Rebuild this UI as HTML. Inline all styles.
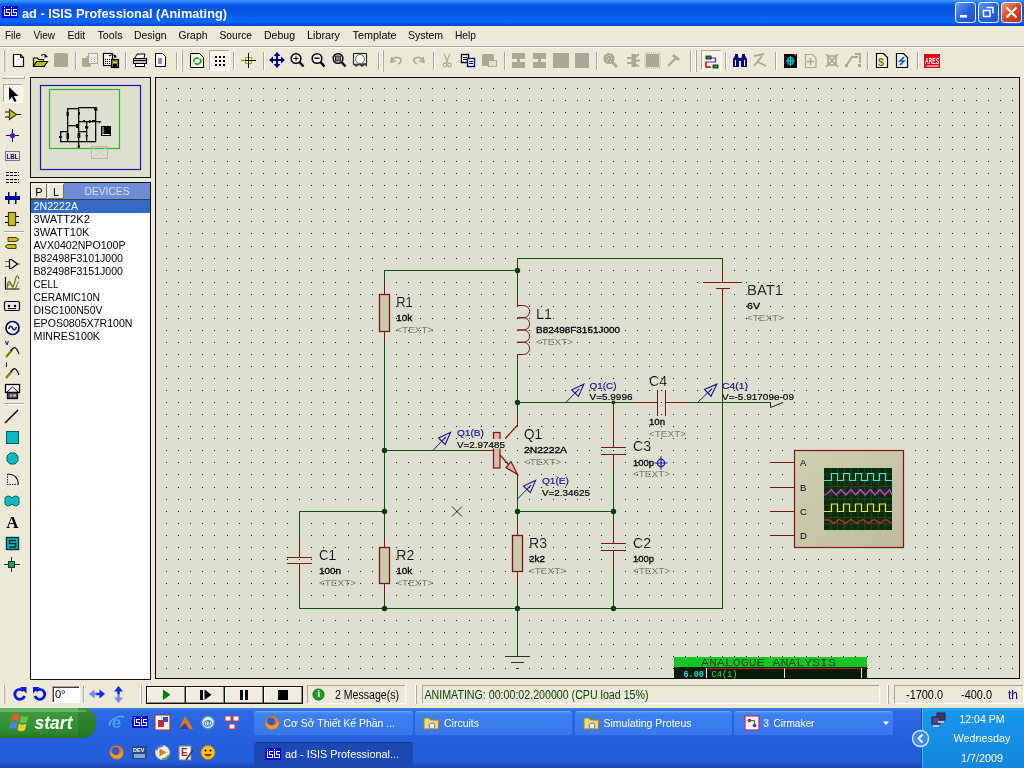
<!DOCTYPE html>
<html><head><meta charset="utf-8"><title>ad - ISIS Professional (Animating)</title>
<style>html,body{margin:0;padding:0;width:1024px;height:768px;overflow:hidden;background:#ECE9D8}
svg{display:block;font-family:"Liberation Sans",sans-serif;will-change:transform}</style></head>
<body><svg width="1024" height="768" viewBox="0 0 1024 768">
<defs>
<linearGradient id="tb" x1="0" y1="0" x2="0" y2="1">
<stop offset="0" stop-color="#3C96FF"/><stop offset="0.06" stop-color="#2E88FA"/><stop offset="0.16" stop-color="#0C60EE"/>
<stop offset="0.26" stop-color="#0454E4"/><stop offset="0.5" stop-color="#0455E6"/><stop offset="0.7" stop-color="#0663F6"/>
<stop offset="0.85" stop-color="#0664F8"/><stop offset="0.93" stop-color="#0452E0"/><stop offset="1" stop-color="#0340C4"/>
</linearGradient>
<linearGradient id="wb" x1="0" y1="0" x2="1" y2="1"><stop offset="0" stop-color="#6C9CF8"/><stop offset="0.5" stop-color="#2A62E0"/><stop offset="1" stop-color="#2050C8"/></linearGradient>
<linearGradient id="wc" x1="0" y1="0" x2="1" y2="1"><stop offset="0" stop-color="#F0A088"/><stop offset="0.5" stop-color="#D84820"/><stop offset="1" stop-color="#B83010"/></linearGradient>
</defs>
<rect x="0" y="0" width="1024" height="26" fill="url(#tb)" />
<rect x="2" y="6" width="16" height="12" fill="#0000D0" />
<rect x="4" y="7" width="1" height="1" fill="#fff" />
<rect x="4" y="9" width="1" height="7" fill="#fff" />
<rect x="4" y="15" width="6" height="1" fill="#fff" />
<rect x="6" y="9" width="4" height="1" fill="#fff" />
<rect x="6" y="9" width="1" height="4" fill="#fff" />
<rect x="6" y="12" width="4" height="1" fill="#fff" />
<rect x="9" y="12" width="1" height="4" fill="#fff" />
<rect x="11" y="7" width="1" height="1" fill="#fff" />
<rect x="11" y="9" width="1" height="7" fill="#fff" />
<rect x="11" y="15" width="6" height="1" fill="#fff" />
<rect x="13" y="9" width="4" height="1" fill="#fff" />
<rect x="13" y="9" width="1" height="4" fill="#fff" />
<rect x="13" y="12" width="4" height="1" fill="#fff" />
<rect x="16" y="12" width="1" height="4" fill="#fff" />
<text x="22" y="18" font-size="13.5" fill="#fff" textLength="205" lengthAdjust="spacingAndGlyphs" font-weight="bold" >ad - ISIS Professional (Animating)</text>
<rect x="955.5" y="2.5" width="20" height="20" rx="3" fill="url(#wb)" stroke="#fff" stroke-width="1"/>
<rect x="978.5" y="2.5" width="20" height="20" rx="3" fill="url(#wb)" stroke="#fff" stroke-width="1"/>
<rect x="1001.5" y="2.5" width="20" height="20" rx="3" fill="url(#wc)" stroke="#fff" stroke-width="1"/>
<rect x="960" y="15" width="7" height="2.5" fill="#fff" />
<path d="M986.500 7.500h6.500v6M983.500 10.500h6.500v6h-6.500z" fill="none" stroke="#fff" stroke-width="1.5" />
<path d="M1006.500 7.500l10 10M1016.500 7.500l-10 10" fill="none" stroke="#fff" stroke-width="2.2" />
<rect x="0" y="26" width="1024" height="682" fill="#ECE9D8" />
<text x="5" y="39" font-size="11" fill="#000" textLength="16" lengthAdjust="spacingAndGlyphs" >File</text>
<text x="33.5" y="39" font-size="11" fill="#000" textLength="21.5" lengthAdjust="spacingAndGlyphs" >View</text>
<text x="67.5" y="39" font-size="11" fill="#000" textLength="17.5" lengthAdjust="spacingAndGlyphs" >Edit</text>
<text x="97.5" y="39" font-size="11" fill="#000" textLength="25" lengthAdjust="spacingAndGlyphs" >Tools</text>
<text x="134" y="39" font-size="11" fill="#000" textLength="32.5" lengthAdjust="spacingAndGlyphs" >Design</text>
<text x="178.5" y="39" font-size="11" fill="#000" textLength="29" lengthAdjust="spacingAndGlyphs" >Graph</text>
<text x="219.5" y="39" font-size="11" fill="#000" textLength="32.5" lengthAdjust="spacingAndGlyphs" >Source</text>
<text x="264" y="39" font-size="11" fill="#000" textLength="31" lengthAdjust="spacingAndGlyphs" >Debug</text>
<text x="307" y="39" font-size="11" fill="#000" textLength="33" lengthAdjust="spacingAndGlyphs" >Library</text>
<text x="352.5" y="39" font-size="11" fill="#000" textLength="44" lengthAdjust="spacingAndGlyphs" >Template</text>
<text x="408" y="39" font-size="11" fill="#000" textLength="35" lengthAdjust="spacingAndGlyphs" >System</text>
<text x="455" y="39" font-size="11" fill="#000" textLength="21" lengthAdjust="spacingAndGlyphs" >Help</text>
<rect x="0" y="46" width="1024" height="1" fill="#ACA899" />
<rect x="0" y="47" width="1024" height="1" fill="#FFFFFF" />
<rect x="3" y="50" width="1" height="22" fill="#FFFFFF" />
<rect x="4" y="50" width="1" height="22" fill="#ACA899" />
<path d="M13.500 54.500h7l3 3v9h-10z" fill="#fff" stroke="#000" stroke-width="1.2" />
<path d="M20.500 54.500v3h3" fill="none" stroke="#000" stroke-width="1" />
<path d="M33.500 66.500v-8.500h4l1 1.500h5v2" fill="#F0F060" stroke="#000" stroke-width="1.2" />
<path d="M33.500 66.500l3-5h11l-3.500 5z" fill="#B8B820" stroke="#000" stroke-width="1.2" />
<path d="M41 55.500q3-2.500 5.500 0.500" fill="none" stroke="#000" stroke-width="1" />
<path d="M45 54l3 3-3.500 0.500z" fill="#000" />
<rect x="54" y="53" width="14" height="14" rx="1.5" fill="#ACA899"/>
<rect x="75" y="52" width="1" height="18" fill="#ACA899" />
<rect x="76" y="52" width="1" height="18" fill="#FFFFFF" />
<path d="M82 58h9v7q0 2-2 2h-5q-2 0-2-2z" fill="#ACA899"/>
<rect x="88.5" y="53.5" width="9" height="10" fill="#F0EEE4" stroke="#ACA899" stroke-width="1" />
<path d="M91 57.500h1M94 57.500h1M91 59.500h1M94 59.500h1M91 61.500h1M94 61.500h1" stroke="#ACA899"/>
<path d="M86 56h4l-2 3z" fill="#ACA899" />
<rect x="103.5" y="53.5" width="9" height="12" fill="#fff" stroke="#000" stroke-width="1.2" />
<path d="M105 59.500h1M107 59.500h1M109 59.500h1M105 61.500h1M107 61.500h1M109 61.500h1M105 63.500h1M107 63.500h1M109 63.500h1" stroke="#000"/>
<rect x="111.5" y="59.5" width="7" height="8" fill="#8C8420" stroke="#000" stroke-width="1.2" />
<rect x="113" y="64" width="4" height="3" fill="#000" />
<rect x="113" y="62" width="4" height="1" fill="#E8E080" />
<path d="M109 56q3-3 7 0" fill="none" stroke="#000" stroke-width="1" />
<path d="M114 55l3 2-3 1z" fill="#000" />
<rect x="125" y="52" width="1" height="18" fill="#ACA899" />
<rect x="126" y="52" width="1" height="18" fill="#FFFFFF" />
<path d="M135 58l2-4h8l-1 4" fill="#fff" stroke="#000" stroke-width="1" />
<rect x="133.5" y="58.5" width="13" height="5" fill="#C0C0C0" stroke="#000" stroke-width="1" />
<rect x="135.5" y="63.5" width="9" height="3" fill="#fff" stroke="#000" stroke-width="1" />
<rect x="134" y="60" width="12" height="1" fill="#000" />
<path d="M155.5 53.5h7l3 3v10h-10z" fill="#fff" stroke="#000" stroke-width="1" />
<rect x="158" y="58" width="4" height="6" fill="#909090" />
<rect x="176" y="52" width="1" height="18" fill="#ACA899" />
<rect x="177" y="52" width="1" height="18" fill="#FFFFFF" />
<rect x="181" y="50" width="1" height="22" fill="#FFFFFF" />
<rect x="182" y="50" width="1" height="22" fill="#ACA899" />
<path d="M190.5 53.5h9l4 4v10h-13z" fill="#F4F4E8" stroke="#000" stroke-width="1" />
<path d="M194 62a3 3 0 0 1 5-3M200 59a3 3 0 0 1-5 4" fill="none" stroke="#20A020" stroke-width="1.6" />
<rect x="209" y="50" width="21" height="21" fill="#F6F4EC" />
<rect x="209" y="50" width="21" height="1" fill="#ACA899" />
<rect x="209" y="50" width="1" height="21" fill="#ACA899" />
<rect x="209" y="70" width="21" height="1" fill="#fff" />
<rect x="229" y="50" width="1" height="21" fill="#fff" />
<rect x="215" y="56" width="2" height="2" fill="#000" />
<rect x="215" y="60" width="2" height="2" fill="#000" />
<rect x="215" y="64" width="2" height="2" fill="#000" />
<rect x="219" y="56" width="2" height="2" fill="#000" />
<rect x="219" y="60" width="2" height="2" fill="#000" />
<rect x="219" y="64" width="2" height="2" fill="#000" />
<rect x="223" y="56" width="2" height="2" fill="#000" />
<rect x="223" y="60" width="2" height="2" fill="#000" />
<rect x="223" y="64" width="2" height="2" fill="#000" />
<rect x="233" y="52" width="1" height="18" fill="#ACA899" />
<rect x="234" y="52" width="1" height="18" fill="#FFFFFF" />
<rect x="245.5" y="57.5" width="6" height="6" fill="none" stroke="#B0A800" stroke-width="1" />
<rect x="241" y="60" width="15" height="1" fill="#000" />
<rect x="248" y="53" width="1" height="15" fill="#000" />
<rect x="241" y="60" width="4" height="1" fill="#808000" />
<rect x="263" y="52" width="1" height="18" fill="#ACA899" />
<rect x="264" y="52" width="1" height="18" fill="#FFFFFF" />
<path d="M277 52l3.5 4h-2.5v3h3v-2.5l4 3.5-4 3.5v-2.5h-3v3h2.5l-3.5 4-3.5-4h2.5v-3h-3v2.5l-4-3.5 4-3.5v2.5h3v-3h-2.5z" fill="#000080" />
<circle cx="296" cy="58.5" r="4.8" fill="#fff" stroke="#000" stroke-width="1.6" />
<line x1="299.5" y1="62" x2="303.5" y2="66.5" stroke="#000" stroke-width="2.4" />
<rect x="293.5" y="58" width="5.0" height="1" fill="#000" />
<rect x="295.5" y="56" width="1" height="5" fill="#000" />
<circle cx="317" cy="58.5" r="4.8" fill="#fff" stroke="#000" stroke-width="1.6" />
<line x1="320.5" y1="62" x2="324.5" y2="66.5" stroke="#000" stroke-width="2.4" />
<rect x="314.5" y="57.5" width="5" height="1.5" fill="#000" />
<circle cx="338" cy="58.5" r="4.8" fill="#fff" stroke="#000" stroke-width="1.6" />
<line x1="341.5" y1="62" x2="345.5" y2="66.5" stroke="#000" stroke-width="2.4" />
<rect x="335.5" y="56" width="5" height="5" fill="#808080" stroke="#000" stroke-width="0.8" />
<rect x="353.5" y="53.5" width="13" height="11" fill="#fff" stroke="#303030" stroke-width="1.2" />
<path d="M353 64l3 3 3-2 3 2 3-2 2 2v-4" fill="#404040" />
<circle cx="360" cy="59" r="4.5" fill="#fff" stroke="#606060" stroke-width="1" />
<rect x="378" y="52" width="1" height="18" fill="#ACA899" />
<rect x="379" y="52" width="1" height="18" fill="#FFFFFF" />
<rect x="382" y="50" width="1" height="22" fill="#FFFFFF" />
<rect x="383" y="50" width="1" height="22" fill="#ACA899" />
<path d="M392 57l-1 5 5-1M392 61q3-6 9-2q1 3-3 5" fill="none" stroke="#ACA899" stroke-width="1.6" />
<path d="M423 57l1 5-5-1M423 61q-3-6-9-2q-1 3 3 5" fill="none" stroke="#ACA899" stroke-width="1.6" />
<rect x="433" y="52" width="1" height="18" fill="#ACA899" />
<rect x="434" y="52" width="1" height="18" fill="#FFFFFF" />
<path d="M444 54l4 9M450 54l-4 9" fill="none" stroke="#ACA899" stroke-width="1.2" />
<circle cx="445" cy="65" r="1.8" fill="none" stroke="#ACA899" stroke-width="1.2" />
<circle cx="449.5" cy="65" r="1.8" fill="none" stroke="#ACA899" stroke-width="1.2" />
<rect x="461.5" y="54.5" width="7" height="8" fill="#fff" stroke="#000" stroke-width="1.4" />
<rect x="467.5" y="58.5" width="7" height="8" fill="#fff" stroke="#000080" stroke-width="1.4" />
<rect x="463" y="57" width="4" height="1" fill="#000" />
<rect x="463" y="59" width="4" height="1" fill="#000" />
<rect x="469" y="61" width="4" height="1" fill="#000" />
<rect x="469" y="63" width="4" height="1" fill="#000" />
<rect x="482" y="54" width="12" height="12" rx="1.5" fill="#ACA899"/>
<rect x="488.5" y="60.5" width="8" height="6" fill="#E4E0D0" stroke="#ACA899" stroke-width="1" />
<rect x="504" y="52" width="1" height="18" fill="#ACA899" />
<rect x="505" y="52" width="1" height="18" fill="#FFFFFF" />
<rect x="512" y="53" width="13" height="15" fill="#ACA899" />
<rect x="512" y="59" width="13" height="3" fill="#ECE9D8" />
<rect x="517" y="59" width="3" height="3" fill="#ACA899" />
<rect x="533" y="53" width="13" height="15" fill="#ACA899" />
<rect x="533" y="59" width="13" height="3" fill="#ECE9D8" />
<rect x="538" y="59" width="3" height="3" fill="#ACA899" />
<rect x="553" y="53" width="16" height="15" fill="#ACA899" />
<rect x="575" y="53" width="14" height="15" fill="#ACA899" />
<rect x="596" y="52" width="1" height="18" fill="#ACA899" />
<rect x="597" y="52" width="1" height="18" fill="#FFFFFF" />
<circle cx="609" cy="58.5" r="5" fill="#ACA899" stroke="#ACA899" stroke-width="1.2" />
<line x1="612" y1="62" x2="617" y2="67" stroke="#ACA899" stroke-width="2.6" />
<path d="M606 56.500h1M609 55.500h1M611 58.500h1M607 60.500h1M610 61.500h1M608 58.500h1" stroke="#ECE9D8"/>
<rect x="631.5" y="54" width="4.5" height="13" fill="#ACA899" />
<path d="M627 58h5M627 63h5" fill="none" stroke="#ACA899" stroke-width="2" />
<path d="M635 57.500l4-3.500M636 60.500h4M635 64l4 2.500" fill="none" stroke="#ACA899" stroke-width="1.8" />
<rect x="646" y="54" width="13" height="13" fill="#ACA899" />
<rect x="645" y="53" width="15" height="15" fill="none" stroke="#ACA899" stroke-dasharray="1 1"/>
<line x1="668" y1="66" x2="677" y2="57" stroke="#ACA899" stroke-width="2.2" />
<path d="M674 54l6 5-2 2-6-5z" fill="#ACA899" />
<rect x="690" y="50" width="1" height="22" fill="#ACA899" />
<rect x="691" y="50" width="1" height="22" fill="#FFFFFF" />
<rect x="695" y="50" width="1" height="22" fill="#FFFFFF" />
<rect x="696" y="50" width="1" height="22" fill="#ACA899" />
<rect x="701" y="50" width="21" height="21" fill="#F6F4EC" />
<rect x="701" y="50" width="21" height="1" fill="#ACA899" />
<rect x="701" y="50" width="1" height="21" fill="#ACA899" />
<rect x="701" y="70" width="21" height="1" fill="#fff" />
<rect x="721" y="50" width="1" height="21" fill="#fff" />
<path d="M709 58h6.5v4h-9.5v5h5" fill="none" stroke="#6020A0" stroke-width="1.2" />
<path d="M706 62v5h5" fill="none" stroke="#E02020" stroke-width="1.4" />
<rect x="706" y="56" width="5" height="3" fill="#20A020" stroke="#000" stroke-width="0.8" />
<rect x="713" y="65" width="5" height="3" fill="#20A020" stroke="#000" stroke-width="0.8" />
<rect x="725" y="52" width="1" height="18" fill="#ACA899" />
<rect x="726" y="52" width="1" height="18" fill="#FFFFFF" />
<path d="M733 67v-8l2-3v-2h3v2l1 3v8zM741 67v-8l1-3v-2h3v2l2 3v8z" fill="#000080" />
<rect x="738" y="58" width="4" height="3" fill="#000080" />
<rect x="735" y="60" width="1" height="6" fill="#fff" />
<rect x="744" y="60" width="1" height="6" fill="#fff" />
<path d="M754 56l10-2M754 66l8-10M758 62l8 4" fill="none" stroke="#ACA899" stroke-width="1.8" />
<rect x="775" y="52" width="1" height="18" fill="#ACA899" />
<rect x="776" y="52" width="1" height="18" fill="#FFFFFF" />
<rect x="784.5" y="54.5" width="12" height="13" fill="#000" stroke="#000" stroke-width="1" />
<path d="M796 54l-3 0 3 3z" fill="#E02020" />
<path d="M790.5 56v10M786 61h9M788 58h5v6h-5z" fill="none" stroke="#00E0E0" stroke-width="1.2" />
<path d="M805.5 54.5h7l3.5 3.5v9.500h-10.500z" fill="#ECE9D8" stroke="#ACA899" stroke-width="1.2" />
<path d="M810.5 58v7M807 61.5h7" fill="none" stroke="#ACA899" stroke-width="1.6" />
<path d="M826 54l12 13M838 54l-12 13" fill="none" stroke="#ACA899" stroke-width="1.6" />
<rect x="828" y="56" width="8" height="9" fill="none" stroke="#ACA899" stroke-width="1.6" />
<path d="M846 66l6-9h6M855 54l5 0 0 9" fill="none" stroke="#ACA899" stroke-width="1.8" />
<rect x="845" y="64" width="3" height="3" fill="#ACA899" />
<rect x="858" y="64" width="3" height="3" fill="#ACA899" />
<rect x="867" y="52" width="1" height="18" fill="#ACA899" />
<rect x="868" y="52" width="1" height="18" fill="#FFFFFF" />
<path d="M876.5 53.5h7l4 4v10h-11z" fill="#F4F4E0" stroke="#000" stroke-width="1.2" />
<text x="878" y="65.5" font-size="11" fill="#6C8C10" font-weight="bold" >$</text>
<path d="M896.5 53.5h7l4 4v10h-11z" fill="#E0F0FF" stroke="#000" stroke-width="1.2" />
<path d="M904 57l-4 4h4l-4 4" fill="none" stroke="#2050B0" stroke-width="1.6" />
<rect x="917" y="52" width="1" height="18" fill="#ACA899" />
<rect x="918" y="52" width="1" height="18" fill="#FFFFFF" />
<rect x="924" y="54" width="16" height="14" fill="#E00010" />
<text x="925" y="64" font-size="9" fill="#fff" textLength="14" lengthAdjust="spacingAndGlyphs" font-weight="bold" >ARES</text>
<rect x="926" y="65.5" width="13" height="1" fill="#fff" />
<rect x="2" y="76" width="22" height="1" fill="#fff" />
<rect x="2" y="78" width="23" height="1" fill="#ACA899" />
<rect x="24" y="76" width="1" height="2" fill="#ACA899" />
<rect x="3" y="84" width="20" height="19" fill="#F6F4EC" />
<rect x="3" y="84" width="20" height="1" fill="#ACA899" />
<rect x="3" y="84" width="1" height="19" fill="#ACA899" />
<rect x="3" y="102" width="20" height="1" fill="#fff" />
<rect x="22" y="84" width="1" height="19" fill="#fff" />
<path d="M9 87v13l3-3 2.500 5 2-1-2.500-5h4.500z" fill="#000" />
<path d="M5 112h5M5 117h5M15 114.5h6" fill="none" stroke="#000" stroke-width="1" />
<path d="M9.5 109.500v10l7-5z" fill="#C8C020" stroke="#404000" stroke-width="1.2" />
<rect x="6" y="135" width="13" height="1" fill="#101060" />
<rect x="12" y="129" width="1" height="13" fill="#101060" />
<circle cx="12.5" cy="135.5" r="2.6" fill="#5018C0" />
<rect x="5.500" y="151.500" width="14" height="9" fill="none" stroke="#000060" stroke-dasharray="1 1"/>
<text x="6.5" y="159" font-size="6.5" fill="#000050" textLength="12" lengthAdjust="spacingAndGlyphs" font-weight="bold" >LBL</text>
<line x1="6" y1="172.5" x2="19" y2="172.5" stroke="#000" stroke-dasharray="3 1"/>
<line x1="6" y1="175.5" x2="19" y2="175.5" stroke="#000" stroke-dasharray="3 1"/>
<line x1="6" y1="179.5" x2="19" y2="179.5" stroke="#000" stroke-dasharray="3 1"/>
<line x1="6" y1="182.5" x2="19" y2="182.5" stroke="#000" stroke-dasharray="3 1"/>
<rect x="5" y="196" width="15" height="4" fill="#000098" />
<rect x="8" y="192" width="1.5" height="12" fill="#000080" />
<rect x="15" y="192" width="1.5" height="12" fill="#000080" />
<rect x="8.5" y="212.5" width="7" height="13" fill="#C8C020" stroke="#404000" stroke-width="1.2" />
<rect x="5" y="216" width="3" height="1" fill="#000" />
<rect x="5" y="222" width="3" height="1" fill="#000" />
<rect x="16" y="216" width="3" height="1" fill="#000" />
<rect x="16" y="222" width="3" height="1" fill="#000" />
<rect x="4" y="231" width="20" height="1" fill="#ACA899" />
<rect x="4" y="232" width="20" height="1" fill="#fff" />
<path d="M8 237.500h8l3 2-3 2h-8z" fill="#C8C020" stroke="#404000" stroke-width="1" />
<path d="M16 244.500h-8l-3 2 3 2h8z" fill="#C8C020" stroke="#404000" stroke-width="1" />
<path d="M5 261.500h4M5 266.500h4M17 264h3" fill="none" stroke="#707000" stroke-width="1" />
<path d="M9.500 259v10M9.500 259.500h2l6 4.500-6 4.500h-2" fill="none" stroke="#000" stroke-width="1.2" />
<path d="M5.500 277v12h14" fill="none" stroke="#000" stroke-width="1.2" />
<path d="M7 286q2-8 4-2t4-3 4-2" fill="none" stroke="#707000" stroke-width="1.2" />
<path d="M7 288c2-6 4-6 6 0s4-6 6-6" fill="none" stroke="#208020" stroke-width="1" />
<rect x="4.500" y="301.500" width="15" height="9" rx="1.5" fill="#E8E8E8" stroke="#000" stroke-width="1.200"/>
<circle cx="9" cy="306" r="1.3" fill="#000" />
<circle cx="15" cy="306" r="1.3" fill="#000" />
<rect x="8" y="308" width="8" height="1" fill="#000" />
<circle cx="12.5" cy="328" r="6.5" fill="#fff" stroke="#000060" stroke-width="1.6" />
<path d="M8.500 329q2-5 4-1t4-1" fill="none" stroke="#0000C0" stroke-width="1.6" />
<text x="5" y="345" font-size="7" fill="#000060" font-weight="bold" >v</text>
<path d="M6 357l6-7" fill="none" stroke="#808000" stroke-width="2.2" />
<path d="M11 351q4-8 8 3" fill="none" stroke="#000" stroke-width="1.2" />
<text x="5.5" y="367" font-size="7" fill="#000060" font-weight="bold" >I</text>
<path d="M6 378l6-7" fill="none" stroke="#808000" stroke-width="2.2" />
<path d="M11 372q4-8 8 3" fill="none" stroke="#000" stroke-width="1.2" />
<rect x="5.5" y="384.5" width="14" height="8" fill="#fff" stroke="#000" stroke-width="1.3" />
<path d="M7 392l5.500-5 5.500 5" fill="none" stroke="#000" stroke-width="1" />
<rect x="7.5" y="392.5" width="10" height="6" fill="#585858" stroke="#000" stroke-width="1.3" />
<rect x="10" y="394.5" width="2" height="2" fill="#C0C0C0" />
<rect x="13" y="394.5" width="3" height="2" fill="#C0C0C0" />
<rect x="4" y="403" width="20" height="1" fill="#ACA899" />
<rect x="4" y="404" width="20" height="1" fill="#fff" />
<line x1="5" y1="423" x2="18" y2="410" stroke="#000" stroke-width="1.4" />
<rect x="6.5" y="431.5" width="12" height="12" fill="#10B8C0" stroke="#006068" stroke-width="1" />
<path d="M10 453h5l3 3v5l-3 3h-5l-3-3v-5z" fill="#10B8C0" stroke="#006068" stroke-width="1" />
<path d="M7.500 474q10 0 11 10" fill="none" stroke="#000" stroke-width="1.2" />
<path d="M7.500 474v10.500h11" fill="none" stroke="#2020A0" stroke-dasharray="1.500 1"/>
<path d="M5 498q3-4 7 0q4-4 7 0v6q-3 4-7 0q-4 4-7 0z" fill="#10B8C0" stroke="#006068" stroke-width="1" />
<text x="12.5" y="528" font-size="17" fill="#000" font-weight="bold" text-anchor="middle" font-family='"Liberation Serif", serif' >A</text>
<rect x="6.5" y="537.5" width="12" height="12" fill="#10B8C0" stroke="#003038" stroke-width="1.4" />
<path d="M16 540.500h-6.500v3h6v3.500h-6.500" fill="none" stroke="#003038" stroke-width="1.6" />
<rect x="4" y="564" width="16" height="1" fill="#004020" />
<rect x="11" y="557" width="1" height="15" fill="#004020" />
<rect x="8.5" y="561.5" width="6" height="6" fill="#209070" stroke="#004020" stroke-width="1" />
<rect x="30" y="77" width="121" height="101" fill="#DEDFCF" />
<rect x="30" y="77" width="121" height="1" fill="#101010" />
<rect x="30" y="77" width="1" height="101" fill="#101010" />
<rect x="30" y="177" width="121" height="1" fill="#101010" />
<rect x="150" y="77" width="1" height="101" fill="#101010" />
<rect x="40.5" y="85.5" width="100" height="84" fill="none" stroke="#1818A0" stroke-width="1.2" />
<rect x="49.5" y="89.5" width="70" height="59" fill="none" stroke="#28B828" stroke-width="1.2" />
<rect x="91.5" y="146.5" width="16" height="12" fill="none" stroke="#B8B8B0" stroke-width="1" />
<path d="M92 147l15 11M107 147l-15 11" fill="none" stroke="#C8C8C0" stroke-width="0.8" />
<rect x="67" y="108" width="12" height="1.3" fill="#0A0A0A" />
<rect x="78" y="107" width="19" height="1.3" fill="#0A0A0A" />
<rect x="67" y="108" width="1.3" height="34" fill="#0A0A0A" />
<rect x="78" y="107" width="1.3" height="41" fill="#0A0A0A" />
<rect x="95" y="107" width="1.3" height="35" fill="#0A0A0A" />
<rect x="78" y="121" width="23" height="1.3" fill="#0A0A0A" />
<rect x="86" y="121" width="1.3" height="21" fill="#0A0A0A" />
<rect x="67" y="125" width="11" height="1.3" fill="#0A0A0A" />
<rect x="78" y="131" width="9" height="1.3" fill="#0A0A0A" />
<rect x="60" y="131" width="8" height="1.3" fill="#0A0A0A" />
<rect x="60" y="131" width="1.3" height="11" fill="#0A0A0A" />
<rect x="60" y="141" width="36" height="1.3" fill="#0A0A0A" />
<rect x="66.5" y="112" width="2.3" height="4" fill="#0A0A0A" />
<rect x="78" y="112" width="2" height="3" fill="#0A0A0A" />
<rect x="66.5" y="133" width="2.5" height="6" fill="#0A0A0A" />
<rect x="77.5" y="133" width="2.8" height="5" fill="#0A0A0A" />
<rect x="85" y="126" width="3.3" height="2.5" fill="#0A0A0A" />
<rect x="85.5" y="135" width="2.5" height="1.5" fill="#0A0A0A" />
<rect x="59" y="136" width="3" height="2" fill="#0A0A0A" />
<rect x="94" y="108.5" width="3.5" height="2" fill="#0A0A0A" />
<rect x="76" y="124" width="3" height="4" fill="#0A0A0A" />
<rect x="83" y="120" width="2" height="1.5" fill="#0A0A0A" />
<rect x="89" y="120" width="1.5" height="3" fill="#0A0A0A" />
<rect x="92" y="120" width="3" height="1.5" fill="#0A0A0A" />
<path d="M98 121l3 0-1.500 2.500z" fill="#0A0A0A" />
<rect x="77.5" y="145.5" width="2.5" height="2" fill="#0A0A0A" />
<rect x="73" y="125" width="1.5" height="1" fill="#0A0A0A" />
<rect x="101" y="126" width="10" height="10" fill="#000" />
<rect x="102.5" y="127" width="1" height="8" fill="#E8E8E0" />
<rect x="102.5" y="134" width="7.5" height="1" fill="#E8E8E0" />
<rect x="30" y="182" width="121" height="498" fill="#fff" />
<rect x="30" y="182" width="121" height="1" fill="#101010" />
<rect x="30" y="182" width="1" height="498" fill="#101010" />
<rect x="30" y="679" width="121" height="1" fill="#101010" />
<rect x="150" y="182" width="1" height="498" fill="#101010" />
<rect x="31" y="183" width="119" height="16" fill="#ECE9D8" />
<rect x="31" y="184" width="16" height="15" fill="#ECE9D8" />
<rect x="31" y="184" width="16" height="1" fill="#fff" />
<rect x="31" y="184" width="1" height="15" fill="#fff" />
<rect x="31" y="198" width="16" height="1" fill="#716F64" />
<rect x="46" y="184" width="1" height="15" fill="#716F64" />
<text x="39.0" y="195.5" font-size="11" fill="#000" text-anchor="middle" >P</text>
<rect x="48" y="184" width="16" height="15" fill="#ECE9D8" />
<rect x="48" y="184" width="16" height="1" fill="#fff" />
<rect x="48" y="184" width="1" height="15" fill="#fff" />
<rect x="48" y="198" width="16" height="1" fill="#716F64" />
<rect x="63" y="184" width="1" height="15" fill="#716F64" />
<text x="56.0" y="195.5" font-size="11" fill="#000" text-anchor="middle" >L</text>
<rect x="64" y="183" width="86" height="16" fill="#6E8CD8" />
<text x="107" y="195" font-size="11" fill="#D4E0F4" textLength="45" lengthAdjust="spacingAndGlyphs" text-anchor="middle" >DEVICES</text>
<rect x="31" y="199" width="119" height="1" fill="#404040" />
<rect x="31" y="200" width="119" height="13" fill="#316AC5" />
<text x="33.5" y="210" font-size="11" fill="#fff" textLength="44.5" lengthAdjust="spacingAndGlyphs" >2N2222A</text>
<text x="33.5" y="223" font-size="11" fill="#000" textLength="56.5" lengthAdjust="spacingAndGlyphs" >3WATT2K2</text>
<text x="33.5" y="236" font-size="11" fill="#000" textLength="56" lengthAdjust="spacingAndGlyphs" >3WATT10K</text>
<text x="33.5" y="249" font-size="11" fill="#000" textLength="92" lengthAdjust="spacingAndGlyphs" >AVX0402NPO100P</text>
<text x="33.5" y="262" font-size="11" fill="#000" textLength="89.5" lengthAdjust="spacingAndGlyphs" >B82498F3101J000</text>
<text x="33.5" y="275" font-size="11" fill="#000" textLength="89.5" lengthAdjust="spacingAndGlyphs" >B82498F3151J000</text>
<text x="33.5" y="288" font-size="11" fill="#000" textLength="25" lengthAdjust="spacingAndGlyphs" >CELL</text>
<text x="33.5" y="301" font-size="11" fill="#000" textLength="66.5" lengthAdjust="spacingAndGlyphs" >CERAMIC10N</text>
<text x="33.5" y="314" font-size="11" fill="#000" textLength="69" lengthAdjust="spacingAndGlyphs" >DISC100N50V</text>
<text x="33.5" y="327" font-size="11" fill="#000" textLength="99" lengthAdjust="spacingAndGlyphs" >EPOS0805X7R100N</text>
<text x="33.5" y="340" font-size="11" fill="#000" textLength="66.5" lengthAdjust="spacingAndGlyphs" >MINRES100K</text>
<rect x="155" y="77" width="865" height="602" fill="#DEDFCF" />
<rect x="155" y="77" width="865" height="1" fill="#0C0C0C" />
<rect x="155" y="77" width="1" height="602" fill="#0C0C0C" />
<rect x="155" y="678" width="865" height="1" fill="#0C0C0C" />
<rect x="1019" y="77" width="1" height="602" fill="#0C0C0C" />
<g stroke="#1A1A14" stroke-width="1" stroke-dasharray="1 11 1 11 1 11 1 11 1 12 1 11 1 11 1 11 1 11 1 11 1 11 1 11 1 11 1 11 1 12 1 11 1 11 1 11 1 11 1 11 1 11 1 11 1 11 1 11 1 12 1 11 1 11 1 11 1 11 1 11 1 11 1 11 1 11 1 11 1 11 1 11 1 11 1 11 1 11 1 11 1 11 1 11 1 11 1 11 1 12 1 11 1 11 1 11 1 11 1 11 1 11 1 11 1 11 1 11 1 12 1 11 1 11 1 11 1 11 1 11 1 11 1 11 1 11 1 11 1 12 1 11 1 11 1 11 1 11 1 11 1 0" shape-rendering="crispEdges"><line x1="166" y1="88.5" x2="1013" y2="88.5"/><line x1="166" y1="100.5" x2="1013" y2="100.5"/><line x1="166" y1="112.5" x2="1013" y2="112.5"/><line x1="166" y1="125.5" x2="1013" y2="125.5"/><line x1="166" y1="137.5" x2="1013" y2="137.5"/><line x1="166" y1="149.5" x2="1013" y2="149.5"/><line x1="166" y1="161.5" x2="1013" y2="161.5"/><line x1="166" y1="173.5" x2="1013" y2="173.5"/><line x1="166" y1="185.5" x2="1013" y2="185.5"/><line x1="166" y1="197.5" x2="1013" y2="197.5"/><line x1="166" y1="209.5" x2="1013" y2="209.5"/><line x1="166" y1="221.5" x2="1013" y2="221.5"/><line x1="166" y1="233.5" x2="1013" y2="233.5"/><line x1="166" y1="246.5" x2="1013" y2="246.5"/><line x1="166" y1="258.5" x2="1013" y2="258.5"/><line x1="166" y1="270.5" x2="1013" y2="270.5"/><line x1="166" y1="282.5" x2="1013" y2="282.5"/><line x1="166" y1="294.5" x2="1013" y2="294.5"/><line x1="166" y1="306.5" x2="1013" y2="306.5"/><line x1="166" y1="318.5" x2="1013" y2="318.5"/><line x1="166" y1="330.5" x2="1013" y2="330.5"/><line x1="166" y1="342.5" x2="1013" y2="342.5"/><line x1="166" y1="354.5" x2="1013" y2="354.5"/><line x1="166" y1="366.5" x2="1013" y2="366.5"/><line x1="166" y1="378.5" x2="1013" y2="378.5"/><line x1="166" y1="390.5" x2="1013" y2="390.5"/><line x1="166" y1="402.5" x2="1013" y2="402.5"/><line x1="166" y1="414.5" x2="1013" y2="414.5"/><line x1="166" y1="426.5" x2="1013" y2="426.5"/><line x1="166" y1="438.5" x2="1013" y2="438.5"/><line x1="166" y1="450.5" x2="1013" y2="450.5"/><line x1="166" y1="462.5" x2="1013" y2="462.5"/><line x1="166" y1="474.5" x2="1013" y2="474.5"/><line x1="166" y1="487.5" x2="1013" y2="487.5"/><line x1="166" y1="499.5" x2="1013" y2="499.5"/><line x1="166" y1="511.5" x2="1013" y2="511.5"/><line x1="166" y1="523.5" x2="1013" y2="523.5"/><line x1="166" y1="535.5" x2="1013" y2="535.5"/><line x1="166" y1="547.5" x2="1013" y2="547.5"/><line x1="166" y1="559.5" x2="1013" y2="559.5"/><line x1="166" y1="571.5" x2="1013" y2="571.5"/><line x1="166" y1="583.5" x2="1013" y2="583.5"/><line x1="166" y1="595.5" x2="1013" y2="595.5"/><line x1="166" y1="608.5" x2="1013" y2="608.5"/><line x1="166" y1="620.5" x2="1013" y2="620.5"/><line x1="166" y1="632.5" x2="1013" y2="632.5"/><line x1="166" y1="644.5" x2="1013" y2="644.5"/><line x1="166" y1="656.5" x2="1013" y2="656.5"/><line x1="166" y1="668.5" x2="1013" y2="668.5"/></g>
<g fill="#144C1C">
<rect x="384" y="270" width="134" height="1" fill="#144C1C" />
<rect x="384" y="270" width="1" height="13" fill="#144C1C" />
<rect x="384" y="343" width="1" height="193" fill="#144C1C" />
<rect x="517" y="258" width="1" height="40" fill="#144C1C" />
<rect x="517" y="258" width="206" height="1" fill="#144C1C" />
<rect x="722" y="258" width="1" height="12" fill="#144C1C" />
<rect x="722" y="305" width="1" height="304" fill="#144C1C" />
<rect x="517" y="355" width="1" height="48" fill="#144C1C" />
<rect x="517" y="402" width="121" height="1" fill="#144C1C" />
<rect x="685" y="402" width="86" height="1" fill="#144C1C" />
<rect x="517" y="402" width="1" height="13" fill="#144C1C" />
<rect x="517" y="415" width="1" height="11" fill="#7C1515" />
<rect x="384" y="450" width="97" height="1" fill="#144C1C" />
<rect x="517" y="474" width="1" height="13" fill="#7C1515" />
<rect x="517" y="487" width="1" height="37" fill="#144C1C" />
<rect x="517" y="583" width="1" height="74" fill="#144C1C" />
<rect x="517" y="511" width="97" height="1" fill="#144C1C" />
<rect x="613" y="402" width="1" height="12" fill="#144C1C" />
<rect x="613" y="471" width="1" height="52" fill="#144C1C" />
<rect x="613" y="573" width="1" height="36" fill="#144C1C" />
<rect x="299" y="511" width="86" height="1" fill="#144C1C" />
<rect x="299" y="511" width="1" height="25" fill="#144C1C" />
<rect x="299" y="587" width="1" height="22" fill="#144C1C" />
<rect x="299" y="608" width="424" height="1" fill="#144C1C" />
<rect x="384" y="596" width="1" height="13" fill="#144C1C" />
</g>
<circle cx="517.5" cy="270.5" r="2.7" fill="#0A3A0C" />
<circle cx="517.5" cy="402.5" r="2.7" fill="#0A3A0C" />
<circle cx="384.5" cy="450.5" r="2.7" fill="#0A3A0C" />
<circle cx="384.5" cy="511.5" r="2.7" fill="#0A3A0C" />
<circle cx="517.5" cy="511.5" r="2.7" fill="#0A3A0C" />
<circle cx="613.5" cy="511.5" r="2.7" fill="#0A3A0C" />
<circle cx="384.5" cy="608.5" r="2.7" fill="#0A3A0C" />
<circle cx="517.5" cy="608.5" r="2.7" fill="#0A3A0C" />
<circle cx="613.5" cy="608.5" r="2.7" fill="#0A3A0C" />
<circle cx="613.5" cy="402.5" r="2.0" fill="#0A3A0C" />
<rect x="505" y="656" width="25" height="1" fill="#1A3A1A" />
<rect x="511" y="662" width="13" height="1" fill="#1A3A1A" />
<rect x="516" y="668" width="3" height="1" fill="#1A3A1A" />
<path d="M770.500 402.500v5l12.500-5" fill="none" stroke="#202818" stroke-width="1" />
<rect x="379.5" y="294.5" width="10" height="37" fill="#CCC9AD" stroke="#7C1515" stroke-width="1.3" />
<rect x="384" y="282" width="1" height="12" fill="#7C1515" />
<rect x="384" y="332" width="1" height="12" fill="#7C1515" />
<rect x="379.5" y="547.5" width="10" height="36" fill="#CCC9AD" stroke="#7C1515" stroke-width="1.3" />
<rect x="384" y="535" width="1" height="12" fill="#7C1515" />
<rect x="384" y="584" width="1" height="12" fill="#7C1515" />
<rect x="512.5" y="535.5" width="10" height="36" fill="#CCC9AD" stroke="#7C1515" stroke-width="1.3" />
<rect x="517" y="523" width="1" height="12" fill="#7C1515" />
<rect x="517" y="572" width="1" height="12" fill="#7C1515" />
<rect x="517" y="298" width="1" height="8" fill="#7C1515" />
<rect x="517" y="354" width="1" height="6" fill="#7C1515" />
<path d="M517.5 305.500M517.5 305.5h6a6.100 6.100 0 0 1 0 12.250h-6M517.5 317.75h6a6.100 6.100 0 0 1 0 12.250h-6M517.5 330.0h6a6.100 6.100 0 0 1 0 12.250h-6M517.5 342.25h6a6.100 6.100 0 0 1 0 12.250h-6" fill="none" stroke="#7C1515" stroke-width="1" />
<rect x="613" y="414" width="1" height="34" fill="#7C1515" />
<rect x="613" y="454" width="1" height="17" fill="#7C1515" />
<rect x="601" y="447" width="25" height="1" fill="#7C1515" />
<rect x="601" y="454" width="25" height="1" fill="#7C1515" />
<rect x="613" y="523" width="1" height="21" fill="#7C1515" />
<rect x="613" y="550" width="1" height="23" fill="#7C1515" />
<rect x="601" y="543" width="25" height="1" fill="#7C1515" />
<rect x="601" y="550" width="25" height="1" fill="#7C1515" />
<rect x="299" y="535" width="1" height="23" fill="#7C1515" />
<rect x="299" y="563" width="1" height="25" fill="#7C1515" />
<rect x="287" y="557" width="25" height="1" fill="#7C1515" />
<rect x="287" y="563" width="25" height="1" fill="#7C1515" />
<rect x="637" y="402" width="21" height="1" fill="#7C1515" />
<rect x="665" y="402" width="21" height="1" fill="#7C1515" />
<rect x="657" y="390" width="1" height="26" fill="#7C1515" />
<rect x="665" y="390" width="1" height="26" fill="#7C1515" />
<rect x="722" y="269" width="1" height="14" fill="#7C1515" />
<rect x="722" y="288" width="1" height="18" fill="#7C1515" />
<rect x="703" y="282" width="39" height="1" fill="#7C1515" />
<rect x="716" y="288" width="14" height="1" fill="#7C1515" />
<rect x="493.5" y="432.5" width="6.5" height="35.5" fill="#D8B8A8" stroke="#7C1515" stroke-width="1.2" />
<rect x="480" y="450" width="14" height="1" fill="#7C1515" />
<line x1="517.5" y1="425" x2="505.5" y2="438.5" stroke="#7C1515" stroke-width="1.2" />
<line x1="500" y1="455" x2="509" y2="465" stroke="#7C1515" stroke-width="1.2" />
<path d="M517.500 474.500L506 467.500L511 461.500z" fill="#D8B8A8" stroke="#7C1515" stroke-width="1.2" />
<text x="396.3" y="306.8" font-size="14.5" fill="#000" textLength="16.5" lengthAdjust="spacingAndGlyphs" stroke="#DEDFCF" stroke-width="0.2">R1</text>
<text x="396.3" y="320.8" font-size="9.5" fill="#000" textLength="16" lengthAdjust="spacingAndGlyphs" stroke="#000" stroke-width="0.3">10k</text>
<text x="396.3" y="332.8" font-size="9" fill="#7C7C74" textLength="37" lengthAdjust="spacingAndGlyphs" >&lt;TEXT&gt;</text>
<text x="536" y="319" font-size="14.5" fill="#000" textLength="16" lengthAdjust="spacingAndGlyphs" stroke="#DEDFCF" stroke-width="0.2">L1</text>
<text x="536" y="333" font-size="9.5" fill="#000" textLength="84" lengthAdjust="spacingAndGlyphs" stroke="#000" stroke-width="0.3">B82498F3151J000</text>
<text x="536" y="345" font-size="9" fill="#7C7C74" textLength="37" lengthAdjust="spacingAndGlyphs" >&lt;TEXT&gt;</text>
<text x="747" y="295" font-size="14.5" fill="#000" textLength="36" lengthAdjust="spacingAndGlyphs" stroke="#DEDFCF" stroke-width="0.2">BAT1</text>
<text x="747" y="309" font-size="9.5" fill="#000" textLength="13" lengthAdjust="spacingAndGlyphs" stroke="#000" stroke-width="0.3">6V</text>
<text x="747" y="321" font-size="9" fill="#7C7C74" textLength="37" lengthAdjust="spacingAndGlyphs" >&lt;TEXT&gt;</text>
<text x="649" y="386" font-size="14.5" fill="#000" textLength="18" lengthAdjust="spacingAndGlyphs" stroke="#DEDFCF" stroke-width="0.2">C4</text>
<text x="649" y="424.5" font-size="9.5" fill="#000" textLength="16" lengthAdjust="spacingAndGlyphs" stroke="#000" stroke-width="0.3">10n</text>
<text x="649" y="437" font-size="9" fill="#7C7C74" textLength="37" lengthAdjust="spacingAndGlyphs" >&lt;TEXT&gt;</text>
<text x="524" y="439" font-size="14.5" fill="#000" textLength="18" lengthAdjust="spacingAndGlyphs" stroke="#DEDFCF" stroke-width="0.2">Q1</text>
<text x="524" y="453" font-size="9.5" fill="#000" textLength="43" lengthAdjust="spacingAndGlyphs" stroke="#000" stroke-width="0.3">2N2222A</text>
<text x="524" y="465" font-size="9" fill="#7C7C74" textLength="37" lengthAdjust="spacingAndGlyphs" >&lt;TEXT&gt;</text>
<text x="633" y="450.5" font-size="14.5" fill="#000" textLength="18" lengthAdjust="spacingAndGlyphs" stroke="#DEDFCF" stroke-width="0.2">C3</text>
<text x="633" y="465.5" font-size="9.5" fill="#000" textLength="21" lengthAdjust="spacingAndGlyphs" stroke="#000" stroke-width="0.3">100p</text>
<text x="633" y="476.5" font-size="9" fill="#7C7C74" textLength="37" lengthAdjust="spacingAndGlyphs" >&lt;TEXT&gt;</text>
<text x="319" y="559.8" font-size="14.5" fill="#000" textLength="17" lengthAdjust="spacingAndGlyphs" stroke="#DEDFCF" stroke-width="0.2">C1</text>
<text x="319" y="573.8" font-size="9.5" fill="#000" textLength="22" lengthAdjust="spacingAndGlyphs" stroke="#000" stroke-width="0.3">100n</text>
<text x="319" y="585.8" font-size="9" fill="#7C7C74" textLength="37" lengthAdjust="spacingAndGlyphs" >&lt;TEXT&gt;</text>
<text x="396.3" y="559.8" font-size="14.5" fill="#000" textLength="18" lengthAdjust="spacingAndGlyphs" stroke="#DEDFCF" stroke-width="0.2">R2</text>
<text x="396.3" y="573.8" font-size="9.5" fill="#000" textLength="16" lengthAdjust="spacingAndGlyphs" stroke="#000" stroke-width="0.3">10k</text>
<text x="396.3" y="585.8" font-size="9" fill="#7C7C74" textLength="37" lengthAdjust="spacingAndGlyphs" >&lt;TEXT&gt;</text>
<text x="529" y="548" font-size="14.5" fill="#000" textLength="18" lengthAdjust="spacingAndGlyphs" stroke="#DEDFCF" stroke-width="0.2">R3</text>
<text x="529" y="561.5" font-size="9.5" fill="#000" textLength="16" lengthAdjust="spacingAndGlyphs" stroke="#000" stroke-width="0.3">2k2</text>
<text x="529" y="573.5" font-size="9" fill="#7C7C74" textLength="37" lengthAdjust="spacingAndGlyphs" >&lt;TEXT&gt;</text>
<text x="633" y="548" font-size="14.5" fill="#000" textLength="18" lengthAdjust="spacingAndGlyphs" stroke="#DEDFCF" stroke-width="0.2">C2</text>
<text x="633" y="561.5" font-size="9.5" fill="#000" textLength="21" lengthAdjust="spacingAndGlyphs" stroke="#000" stroke-width="0.3">100p</text>
<text x="633" y="573.5" font-size="9" fill="#7C7C74" textLength="37" lengthAdjust="spacingAndGlyphs" >&lt;TEXT&gt;</text>
<line x1="432.8" y1="450.5" x2="441.85991400516355" y2="441.2364924216867" stroke="#14149C" stroke-width="1" />
<path d="M450.6 432.3L445.2 444.5L438.5 438.0z" fill="none" stroke="#14149C" stroke-width="1.1" />
<line x1="441.85991400516355" y1="441.2364924216867" x2="446.05515528268506" y2="436.94697605927706" stroke="#14149C" stroke-width="1.1" />
<text x="457" y="436" font-size="9.5" fill="#14149C" textLength="27" lengthAdjust="spacingAndGlyphs" stroke="#14149C" stroke-width="0.2">Q1(B)</text>
<rect x="456" y="439" width="50" height="9.5" fill="#DEDFCF" />
<text x="457" y="447.5" font-size="9.5" fill="#000" textLength="48" lengthAdjust="spacingAndGlyphs" stroke="#000" stroke-width="0.18">V=2.97485</text>
<line x1="565.8" y1="402.5" x2="575.0345127985389" y2="393.1115786548188" stroke="#14149C" stroke-width="1" />
<path d="M583.8 384.2L578.4 396.4L571.7 389.8z" fill="none" stroke="#14149C" stroke-width="1.1" />
<line x1="575.0345127985389" y1="393.1115786548188" x2="579.2419466552402" y2="388.8340209005058" stroke="#14149C" stroke-width="1.1" />
<text x="589.5" y="388.5" font-size="9.5" fill="#14149C" textLength="27" lengthAdjust="spacingAndGlyphs" stroke="#14149C" stroke-width="0.2">Q1(C)</text>
<text x="589.5" y="399.5" font-size="9.5" fill="#000" textLength="43" lengthAdjust="spacingAndGlyphs" stroke="#000" stroke-width="0.18">V=5.9996</text>
<line x1="517.5" y1="499" x2="526.8823943393128" y2="489.3584234966178" stroke="#14149C" stroke-width="1" />
<path d="M535.6 480.4L530.3 492.6L523.5 486.1z" fill="none" stroke="#14149C" stroke-width="1.1" />
<line x1="526.8823943393128" y1="489.3584234966178" x2="531.0668450564426" y2="485.0583802182412" stroke="#14149C" stroke-width="1.1" />
<text x="542" y="484" font-size="9.5" fill="#14149C" textLength="27" lengthAdjust="spacingAndGlyphs" stroke="#14149C" stroke-width="0.2">Q1(E)</text>
<text x="542" y="496" font-size="9.5" fill="#000" textLength="48" lengthAdjust="spacingAndGlyphs" stroke="#000" stroke-width="0.18">V=2.34625</text>
<line x1="697.5" y1="402.5" x2="707.7292972819675" y2="392.8007181212431" stroke="#14149C" stroke-width="1" />
<path d="M716.8 384.2L711.0 396.2L704.5 389.4z" fill="none" stroke="#14149C" stroke-width="1.1" />
<line x1="707.7292972819675" y1="392.8007181212431" x2="712.0832345866231" y2="388.6723734230464" stroke="#14149C" stroke-width="1.1" />
<text x="722" y="388.5" font-size="9.5" fill="#14149C" textLength="26" lengthAdjust="spacingAndGlyphs" stroke="#14149C" stroke-width="0.2">C4(1)</text>
<text x="722" y="399.5" font-size="9.5" fill="#000" textLength="72" lengthAdjust="spacingAndGlyphs" stroke="#000" stroke-width="0.18">V=-5.91709e-09</text>
<path d="M452 506.500l10 10M462 506.500l-10 10" fill="none" stroke="#303030" stroke-width="1" />
<circle cx="661" cy="463" r="3.6" fill="none" stroke="#1C1CA8" stroke-width="1.3" />
<path d="M654.500 463h13M661 456.500v13" fill="none" stroke="#1C1CA8" stroke-width="1.2" />
<defs><linearGradient id="sc" x1="0" y1="0" x2="1" y2="1"><stop offset="0" stop-color="#CFCFB4"/><stop offset="1" stop-color="#BDBD9C"/></linearGradient></defs>
<rect x="794.5" y="450.5" width="109" height="97" fill="url(#sc)" stroke="#7C1515" stroke-width="1.2" />
<rect x="770" y="462" width="25" height="1" fill="#7C1515" />
<text x="800" y="466" font-size="9.5" fill="#000" >A</text>
<rect x="770" y="487" width="25" height="1" fill="#7C1515" />
<text x="800" y="491" font-size="9.5" fill="#000" >B</text>
<rect x="770" y="511" width="25" height="1" fill="#7C1515" />
<text x="800" y="515" font-size="9.5" fill="#000" >C</text>
<rect x="770" y="535" width="25" height="1" fill="#7C1515" />
<text x="800" y="539" font-size="9.5" fill="#000" >D</text>
<rect x="824" y="468" width="68" height="62" fill="#0C2A0C" />
<path d="M830.8 468v62M837.6 468v62M844.4 468v62M851.2 468v62M858.0 468v62M864.8 468v62M871.6 468v62M878.4 468v62M885.2 468v62M824 474.2h68M824 480.4h68M824 486.6h68M824 492.8h68M824 499.0h68M824 505.2h68M824 511.4h68M824 517.6h68M824 523.8h68" fill="none" stroke="#1E4A1E" stroke-width="1" />
<path d="M824 480.5H831.5V473.5H837.5V480.5H843.5V473.5H849.5V480.5H855.5V473.5H861.5V480.5H867.5V473.5H873.5V480.5H879.5V473.5H885.5V480.5H892" fill="none" stroke="#40E8D8" stroke-width="1.2" />
<path d="M824 511.5H831.5V504H837.5V511.5H843.5V504H849.5V511.5H855.5V504H861.5V511.5H867.5V504H873.5V511.5H879.5V504H885.5V511.5H892" fill="none" stroke="#E8F040" stroke-width="1.2" />
<path d="M824 495L826.500 494.500L831.4 489.5L836.2 495L841.1 489.5L845.9 495L850.8 489.5L855.6 495L860.5 489.5L865.3 495L870.2 489.5L875.0 495L879.9 489.5L884.7 495L889.6 489.5L892.0 495" fill="none" stroke="#D040D0" stroke-width="1.2" />
<path d="M824 520L827.0 519.6L830.0 520.3L833.0 523.1L836.0 522.0L839.0 519.4L842.0 520.8L845.0 523.3L848.0 521.5L851.0 519.3L854.0 521.4L857.0 523.3L860.0 520.9L863.0 519.4L866.0 521.9L869.0 523.2L872.0 520.4L875.0 519.6L878.0 522.4L881.0 522.9L884.0 520.0L887.0 519.9L890.0 522.8L892.0 522.5" fill="none" stroke="#D83020" stroke-width="1.2" />
<rect x="674" y="657" width="193" height="10" fill="#14C424" />
<rect x="674" y="667" width="193" height="11" fill="#041C04" />
<text x="701" y="666.3" font-size="11" fill="#085008" textLength="135" lengthAdjust="spacingAndGlyphs" font-family='"Liberation Mono", monospace' >ANALOGUE ANALYSIS</text>
<text x="683.5" y="677" font-size="9.5" fill="#20D8E0" textLength="20.5" lengthAdjust="spacingAndGlyphs" font-weight="bold" font-family='"Liberation Mono", monospace' >6.00</text>
<text x="711.5" y="677" font-size="9.5" fill="#30E040" textLength="26" lengthAdjust="spacingAndGlyphs" font-family='"Liberation Mono", monospace' >C4(1)</text>
<rect x="706" y="668" width="157" height="1" fill="#C02020" />
<rect x="706" y="668" width="1" height="10" fill="#E8E8E8" />
<rect x="784" y="668" width="1" height="10" fill="#E8E8E8" />
<rect x="861" y="668" width="1" height="10" fill="#E8E8E8" />
<rect x="3" y="685" width="1" height="19" fill="#FFFFFF" />
<rect x="4" y="685" width="1" height="19" fill="#ACA899" />
<path d="M23.500 691a5 5 0 1 0 1 5" fill="none" stroke="#0818E0" stroke-width="2.8" />
<path d="M20 687h6.500v6.500z" fill="#0818E0" />
<path d="M36 691a5 5 0 1 1-1 5" fill="none" stroke="#0818E0" stroke-width="2.8" />
<path d="M39.500 687h-6.500v6.500z" fill="#0818E0" />
<rect x="52" y="686" width="28" height="17" fill="#fff" />
<rect x="52" y="686" width="28" height="1" fill="#ACA899" />
<rect x="52" y="686" width="1" height="17" fill="#ACA899" />
<rect x="52" y="702" width="28" height="1" fill="#FFFFFF" />
<rect x="79" y="686" width="1" height="17" fill="#FFFFFF" />
<rect x="53" y="687" width="26" height="1" fill="#404040" />
<rect x="53" y="687" width="1" height="15" fill="#404040" />
<text x="55" y="698" font-size="11" fill="#000" >0°</text>
<rect x="83" y="686" width="1" height="17" fill="#ACA899" />
<rect x="84" y="686" width="1" height="17" fill="#FFFFFF" />
<path d="M89 694l5.500-4.500v3.200h3v2.600h-3v3.200z" fill="#7C84F0" />
<path d="M105 694l-5.500-4.500v3.200h-3v2.600h3v3.200z" fill="#1828E0" />
<path d="M118.500 686l4.500 5.500h-3.200v3h-2.600v-3h-3.200z" fill="#1828E0" />
<path d="M118.500 703l4.500-5.500h-3.200v-3h-2.600v3h-3.200z" fill="#7C84F0" />
<rect x="140" y="685" width="1" height="19" fill="#FFFFFF" />
<rect x="141" y="685" width="1" height="19" fill="#ACA899" />
<rect x="146" y="686" width="157" height="18" fill="#101010" />
<rect x="147" y="687" width="38" height="16" fill="#EFEDE2" />
<rect x="147" y="687" width="38" height="1" fill="#fff" />
<rect x="147" y="687" width="1" height="16" fill="#fff" />
<rect x="147" y="702" width="38" height="1" fill="#8C8A7C" />
<rect x="184" y="687" width="1" height="16" fill="#8C8A7C" />
<rect x="186" y="687" width="38" height="16" fill="#EFEDE2" />
<rect x="186" y="687" width="38" height="1" fill="#fff" />
<rect x="186" y="687" width="1" height="16" fill="#fff" />
<rect x="186" y="702" width="38" height="1" fill="#8C8A7C" />
<rect x="223" y="687" width="1" height="16" fill="#8C8A7C" />
<rect x="225" y="687" width="38" height="16" fill="#EFEDE2" />
<rect x="225" y="687" width="38" height="1" fill="#fff" />
<rect x="225" y="687" width="1" height="16" fill="#fff" />
<rect x="225" y="702" width="38" height="1" fill="#8C8A7C" />
<rect x="262" y="687" width="1" height="16" fill="#8C8A7C" />
<rect x="264" y="687" width="38" height="16" fill="#EFEDE2" />
<rect x="264" y="687" width="38" height="1" fill="#fff" />
<rect x="264" y="687" width="1" height="16" fill="#fff" />
<rect x="264" y="702" width="38" height="1" fill="#8C8A7C" />
<rect x="301" y="687" width="1" height="16" fill="#8C8A7C" />
<path d="M163 689.500v10.500l7.500-5.250z" fill="#008000" />
<rect x="200" y="690" width="3" height="10" fill="#000" />
<path d="M204.500 689.500v10.500l7-5.250z" fill="#000" />
<rect x="240" y="690" width="3" height="10" fill="#000" />
<rect x="245" y="690" width="3" height="10" fill="#000" />
<rect x="278" y="690" width="10" height="10" fill="#000" />
<rect x="307" y="685" width="99" height="19" fill="#ECE9D8" />
<rect x="307" y="685" width="99" height="1" fill="#ACA899" />
<rect x="307" y="685" width="1" height="19" fill="#ACA899" />
<rect x="307" y="703" width="99" height="1" fill="#FFFFFF" />
<rect x="405" y="685" width="1" height="19" fill="#FFFFFF" />
<circle cx="318.5" cy="694.5" r="5.5" fill="#20A020" stroke="#106010" stroke-width="1" />
<rect x="318" y="692" width="1.5" height="5" fill="#fff" />
<rect x="318" y="690" width="1.5" height="1.5" fill="#fff" />
<text x="335" y="699" font-size="12" fill="#000" textLength="64" lengthAdjust="spacingAndGlyphs" >2 Message(s)</text>
<rect x="415" y="685" width="1" height="19" fill="#FFFFFF" />
<rect x="416" y="685" width="1" height="19" fill="#ACA899" />
<rect x="422" y="685" width="458" height="19" fill="#ECE9D8" />
<rect x="422" y="685" width="458" height="1" fill="#ACA899" />
<rect x="422" y="685" width="1" height="19" fill="#ACA899" />
<rect x="422" y="703" width="458" height="1" fill="#FFFFFF" />
<rect x="879" y="685" width="1" height="19" fill="#FFFFFF" />
<text x="424.5" y="699" font-size="12" fill="#0A400A" textLength="224" lengthAdjust="spacingAndGlyphs" >ANIMATING: 00:00:02.200000 (CPU load 15%)</text>
<rect x="887" y="685" width="1" height="19" fill="#FFFFFF" />
<rect x="888" y="685" width="1" height="19" fill="#ACA899" />
<rect x="894" y="685" width="130" height="19" fill="#ECE9D8" />
<rect x="894" y="685" width="130" height="1" fill="#ACA899" />
<rect x="894" y="685" width="1" height="19" fill="#ACA899" />
<rect x="894" y="703" width="130" height="1" fill="#FFFFFF" />
<rect x="1023" y="685" width="1" height="19" fill="#FFFFFF" />
<text x="943" y="699" font-size="12" fill="#000" textLength="37" lengthAdjust="spacingAndGlyphs" text-anchor="end" >-1700.0</text>
<text x="992" y="699" font-size="12" fill="#000" textLength="31" lengthAdjust="spacingAndGlyphs" text-anchor="end" >-400.0</text>
<text x="1008" y="699" font-size="12" fill="#000080" >th</text>
<defs>
<linearGradient id="tk" x1="0" y1="0" x2="0" y2="1"><stop offset="0" stop-color="#3C80F0"/><stop offset="0.06" stop-color="#2A68E4"/><stop offset="0.5" stop-color="#2660DE"/><stop offset="0.9" stop-color="#245CD8"/><stop offset="1" stop-color="#1A44B0"/></linearGradient>
<linearGradient id="st" x1="0" y1="0" x2="0" y2="1"><stop offset="0" stop-color="#68B868"/><stop offset="0.15" stop-color="#3C9A3C"/><stop offset="0.8" stop-color="#2E8A2E"/><stop offset="1" stop-color="#2A702A"/></linearGradient>
<linearGradient id="tr" x1="0" y1="0" x2="0" y2="1"><stop offset="0" stop-color="#2AA4F4"/><stop offset="0.08" stop-color="#1896EC"/><stop offset="1" stop-color="#1186DC"/></linearGradient>
<linearGradient id="bt" x1="0" y1="0" x2="0" y2="1"><stop offset="0" stop-color="#5C98F8"/><stop offset="0.15" stop-color="#3C80F0"/><stop offset="1" stop-color="#3878EC"/></linearGradient>
</defs>
<rect x="0" y="708" width="1024" height="60" fill="url(#tk)" />
<path d="M0 708h86q10 3 10 15t-10 15h-86z" fill="url(#st)"/>
<path d="M78 708h8q10 3 10 15t-10 15h-8z" fill="#246C24" opacity="0.45"/>
<rect x="0" y="710" width="86" height="2" fill="#8CD08C" opacity="0.45"/>
<path d="M12.500 715q4-2.500 7 0l-1.500 6.500q-3-2.500-7 0z" fill="#E85828" />
<path d="M21 715.500q3.500 2.500 7.500 0l-1.500 6.500q-4 2.500-7.500 0z" fill="#68C048" />
<path d="M10.500 723q4-2.500 7 0l-1.500 6.500q-3-2.500-7 0z" fill="#4880F0" />
<path d="M19 723.500q3.500 2.500 7.500 0l-1.500 6.500q-4 2.500-7.500 0z" fill="#F0D030" />
<text x="34.5" y="729" font-size="17.5" fill="#fff" textLength="38" lengthAdjust="spacingAndGlyphs" font-weight="bold" font-style="italic" >start</text>
<text x="116.5" y="728" font-size="17" fill="#48A0F0" font-weight="bold" text-anchor="middle" >e</text>
<path d="M109.500 726q-1-6 8-9q6-2 6 1" fill="none" stroke="#60B0F8" stroke-width="1.3" />
<rect x="132" y="716" width="16" height="12" fill="#0000D0" />
<rect x="134" y="717" width="1" height="1" fill="#fff" />
<rect x="134" y="719" width="1" height="7" fill="#fff" />
<rect x="134" y="725" width="6" height="1" fill="#fff" />
<rect x="136" y="719" width="4" height="1" fill="#fff" />
<rect x="136" y="719" width="1" height="4" fill="#fff" />
<rect x="136" y="722" width="4" height="1" fill="#fff" />
<rect x="139" y="722" width="1" height="4" fill="#fff" />
<rect x="141" y="717" width="1" height="1" fill="#fff" />
<rect x="141" y="719" width="1" height="7" fill="#fff" />
<rect x="141" y="725" width="6" height="1" fill="#fff" />
<rect x="143" y="719" width="4" height="1" fill="#fff" />
<rect x="143" y="719" width="1" height="4" fill="#fff" />
<rect x="143" y="722" width="4" height="1" fill="#fff" />
<rect x="146" y="722" width="1" height="4" fill="#fff" />
<rect x="155" y="715" width="15" height="15" fill="#F0F0F0" stroke="#A03030" stroke-width="1" />
<rect x="158" y="720" width="6" height="7" fill="#C03030" />
<rect x="163" y="717" width="5" height="5" fill="#3050C0" />
<path d="M179 729l6-13 4 6 4 7z" fill="#E07820" />
<path d="M179 729l6-6 4 6z" fill="#3040A0" />
<circle cx="208" cy="722.5" r="6.5" fill="#D8ECF8" stroke="#4088C8" stroke-width="1.6" />
<text x="208" y="726" font-size="9" fill="#2060A0" font-weight="bold" text-anchor="middle" >@</text>
<rect x="225" y="716" width="6" height="5" fill="#F8E8E8" stroke="#C04040" stroke-width="1" />
<rect x="233" y="716" width="6" height="5" fill="#F8E8E8" stroke="#C04040" stroke-width="1" />
<rect x="229" y="724" width="6" height="5" fill="#F8E8E8" stroke="#C04040" stroke-width="1" />
<circle cx="116.5" cy="752.5" r="7" fill="#E87818" />
<circle cx="115.5" cy="751" r="4" fill="#3858C8" />
<path d="M110 752q2 8 10 6q4-3 3-8q-2 6-8 5z" fill="#F0A020" />
<rect x="132" y="746" width="15" height="13" fill="#284888" />
<text x="133" y="752" font-size="5.5" fill="#fff" font-weight="bold" >DEV</text>
<rect x="134" y="754" width="11" height="4" fill="#88A8D8" />
<circle cx="162.5" cy="752.5" r="7" fill="#F0F0F0" stroke="#C8C8C8" stroke-width="1" />
<path d="M159.500 748.500v8l7-4z" fill="#E87818" />
<path d="M156 750a7 7 0 0 1 7-4" fill="none" stroke="#3878E0" stroke-width="2" />
<path d="M169 755a7 7 0 0 1-7 4" fill="none" stroke="#48B048" stroke-width="2" />
<rect x="179" y="746" width="12" height="14" fill="#F8F8F8" stroke="#808080" stroke-width="1" />
<text x="181" y="756" font-size="10" fill="#C02020" font-weight="bold" >E</text>
<line x1="186" y1="760" x2="193" y2="750" stroke="#404040" stroke-width="1.6" />
<circle cx="208" cy="752.5" r="7" fill="#F8C820" stroke="#C07810" stroke-width="1" />
<path d="M204 754q4 5 8 0z" fill="#A02020" />
<circle cx="205.5" cy="750.5" r="1" fill="#000" />
<circle cx="210.5" cy="750.5" r="1" fill="#000" />
<rect x="254" y="711" width="159" height="24" rx="2.500" fill="url(#bt)"/>
<rect x="256" y="711" width="155" height="1" fill="#6CA4FC" />
<text x="283.5" y="727.0" font-size="11" fill="#fff" textLength="111.5" lengthAdjust="spacingAndGlyphs" >Cơ Sở Thiết Kế Phần ...</text>
<rect x="415" y="711" width="157" height="24" rx="2.500" fill="url(#bt)"/>
<rect x="417" y="711" width="153" height="1" fill="#6CA4FC" />
<text x="444" y="727.0" font-size="11" fill="#fff" textLength="35" lengthAdjust="spacingAndGlyphs" >Circuits</text>
<rect x="575" y="711" width="157" height="24" rx="2.500" fill="url(#bt)"/>
<rect x="577" y="711" width="153" height="1" fill="#6CA4FC" />
<text x="603.5" y="727.0" font-size="11" fill="#fff" textLength="88" lengthAdjust="spacingAndGlyphs" >Simulating Proteus</text>
<rect x="734" y="711" width="159" height="24" rx="2.500" fill="url(#bt)"/>
<rect x="736" y="711" width="155" height="1" fill="#6CA4FC" />
<text x="773.5" y="727.0" font-size="11" fill="#fff" textLength="41" lengthAdjust="spacingAndGlyphs" >Cirmaker</text>
<text x="763" y="727" font-size="11" fill="#C8D8FF" font-weight="bold" >3</text>
<rect x="254" y="742" width="159" height="24" rx="2.500" fill="#1C48B4"/>
<rect x="256" y="742" width="155" height="1" fill="#123488" />
<text x="285" y="758.0" font-size="11" fill="#fff" textLength="114" lengthAdjust="spacingAndGlyphs" >ad - ISIS Professional...</text>
<circle cx="272" cy="723" r="7" fill="#E87818" />
<circle cx="271" cy="721.5" r="4" fill="#3858C8" />
<path d="M265.500 722.500q2 8 10 6q4-3 3-8q-2 6-8 5z" fill="#F0A020" />
<path d="M424 729v-11h5l1.500 2h8v9z" fill="#F0D878" stroke="#A08020" stroke-width="1" />
<circle cx="432" cy="726" r="3" fill="#F0F0F0" stroke="#6080C0" stroke-width="1" />
<path d="M584 729v-11h5l1.500 2h8v9z" fill="#F0D878" stroke="#A08020" stroke-width="1" />
<circle cx="592" cy="726" r="3" fill="#F0F0F0" stroke="#6080C0" stroke-width="1" />
<rect x="745" y="716" width="14" height="14" fill="#F8F0F8" stroke="#C03060" stroke-width="1.2" />
<circle cx="749.5" cy="720.5" r="1.8" fill="#C02020" />
<circle cx="754.5" cy="725.5" r="1.8" fill="#2040C0" />
<path d="M749.500 720.500h5v5" fill="none" stroke="#208020" stroke-width="1" />
<path d="M883 721.500h6l-3 3.500z" fill="#fff" />
<rect x="265" y="748" width="16" height="12" fill="#0000D0" />
<rect x="267" y="749" width="1" height="1" fill="#fff" />
<rect x="267" y="751" width="1" height="7" fill="#fff" />
<rect x="267" y="757" width="6" height="1" fill="#fff" />
<rect x="269" y="751" width="4" height="1" fill="#fff" />
<rect x="269" y="751" width="1" height="4" fill="#fff" />
<rect x="269" y="754" width="4" height="1" fill="#fff" />
<rect x="272" y="754" width="1" height="4" fill="#fff" />
<rect x="274" y="749" width="1" height="1" fill="#fff" />
<rect x="274" y="751" width="1" height="7" fill="#fff" />
<rect x="274" y="757" width="6" height="1" fill="#fff" />
<rect x="276" y="751" width="4" height="1" fill="#fff" />
<rect x="276" y="751" width="1" height="4" fill="#fff" />
<rect x="276" y="754" width="4" height="1" fill="#fff" />
<rect x="279" y="754" width="1" height="4" fill="#fff" />
<rect x="921" y="708" width="103" height="60" fill="url(#tr)" />
<rect x="921" y="708" width="1" height="60" fill="#0C58B0" />
<rect x="922" y="708" width="1" height="60" fill="#48B0F8" />
<circle cx="920.5" cy="738.5" r="8" fill="#3C8CF0" stroke="#D0E4FC" stroke-width="1.4" />
<path d="M922.500 734.500l-4 4 4 4" fill="none" stroke="#fff" stroke-width="2" />
<rect x="937" y="713" width="8" height="7" fill="#483868" stroke="#282040" stroke-width="1" />
<rect x="932" y="717" width="8" height="7" fill="#584878" stroke="#282040" stroke-width="1" />
<rect x="933" y="725" width="6" height="2" fill="#C8B8D0" />
<rect x="938" y="721" width="6" height="2" fill="#C8B8D0" />
<text x="982" y="723" font-size="11" fill="#fff" textLength="45" lengthAdjust="spacingAndGlyphs" text-anchor="middle" >12:04 PM</text>
<text x="982" y="742" font-size="11" fill="#fff" textLength="57" lengthAdjust="spacingAndGlyphs" text-anchor="middle" >Wednesday</text>
<text x="982" y="761.5" font-size="11" fill="#fff" textLength="42" lengthAdjust="spacingAndGlyphs" text-anchor="middle" >1/7/2009</text>
</svg></body></html>
